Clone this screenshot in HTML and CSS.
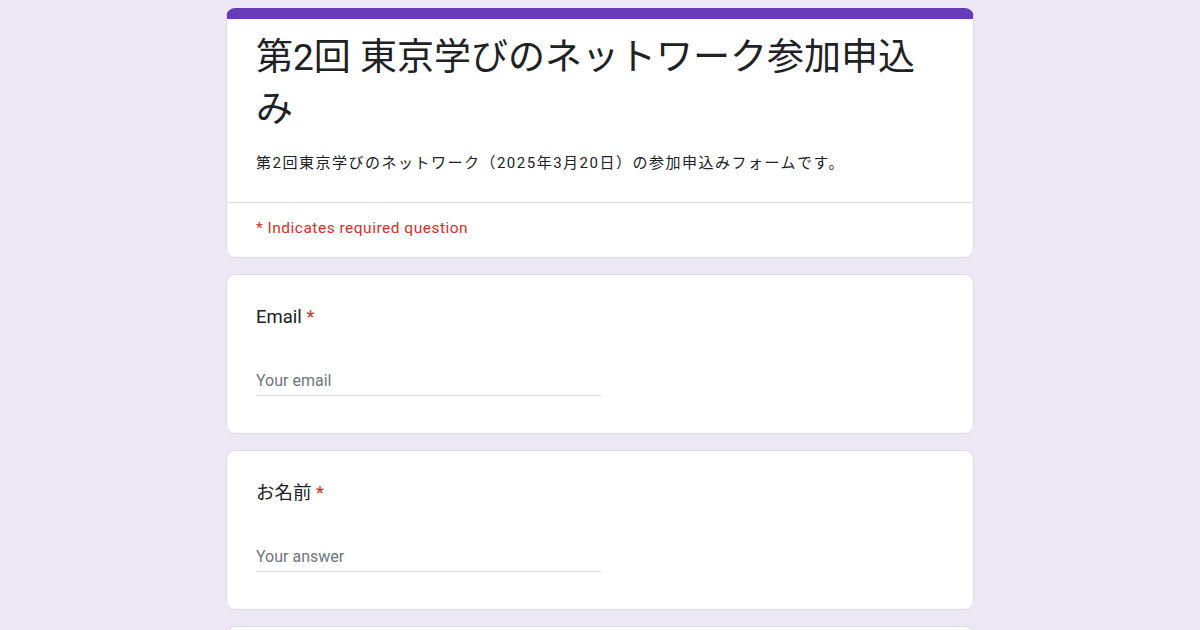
FILE: index.html
```html
<!DOCTYPE html>
<html lang="ja">

<head>
  <meta charset="UTF-8">
  <meta name="viewport" content="width=device-width, initial-scale=1.0">
  <title>第2回 東京学びのネットワーク参加申込み</title>
  <link rel="stylesheet" href="styles.css">
</head>

<body>
  <div class="form-wrap">
    <div class="card header-card">
      <div class="header-top">
        <h1 class="form-title">第2回 東京学びのネットワーク参加申込み</h1>
        <p class="form-desc">第2回東京学びのネットワーク（2025年3月20日）の参加申込みフォームです。</p>
      </div>
      <div class="header-note">* Indicates required question</div>
    </div>

    <div class="card question">
      <div class="q-label">Email <span class="req">*</span></div>
      <input class="q-input" type="email" placeholder="Your email">
    </div>

    <div class="card question">
      <div class="q-label">お名前 <span class="req">*</span></div>
      <input class="q-input" type="text" placeholder="Your answer">
    </div>

    <!-- next question, below the fold -->
    <div class="card question"></div>
  </div>
</body>

</html>
```

FILE: styles.css
```css
body {
  margin: 0;
  background-color: #ede7f6;
  font-family: Roboto, "Noto Sans CJK JP", sans-serif;
  color: #202124;
  height: 630px;
  overflow: hidden;
}

.form-wrap {
  width: 748px;
  margin: 0 auto;
  padding-top: 8px;
  display: flex;
  flex-direction: column;
  gap: 16px;
}

.card {
  background: #ffffff;
  border: 1px solid #dadce0;
  border-radius: 9px;
  box-sizing: border-box;
}

.header-card {
  border-top: 11px solid #673ab7;
}

.header-top {
  padding: 13px 29px 28px;
  border-bottom: 1px solid #dadce0;
}

.form-title {
  margin: 0;
  font-size: 37px;
  font-weight: 400;
  line-height: 52px;
  font-family: Roboto, "Noto Sans CJK JP", sans-serif;
}

.form-desc {
  margin: 16px 0 0;
  font-size: 15px;
  line-height: 22px;
  letter-spacing: 1.5px;
}

.header-note {
  padding: 13px 29px 17px;
  font-size: 15.5px;
  line-height: 24px;
  letter-spacing: 0.5px;
  color: #d93025;
}

.question {
  padding: 28px 29px 38px;
  height: 160px;
  flex-shrink: 0;
}

.q-label {
  font-size: 18.5px;
  line-height: 28px;
}

.req {
  color: #d93025;
}

.q-input {
  display: block;
  margin-top: 39px;
  width: 345px;
  border: none;
  border-bottom: 1px solid #dadce0;
  padding: 0 0 3px;
  font-family: Roboto, "Noto Sans CJK JP", sans-serif;
  font-size: 16px;
  line-height: 22px;
  color: #202124;
  outline: none;
  background: transparent;
}

.q-input::placeholder {
  color: #70757a;
}
```
